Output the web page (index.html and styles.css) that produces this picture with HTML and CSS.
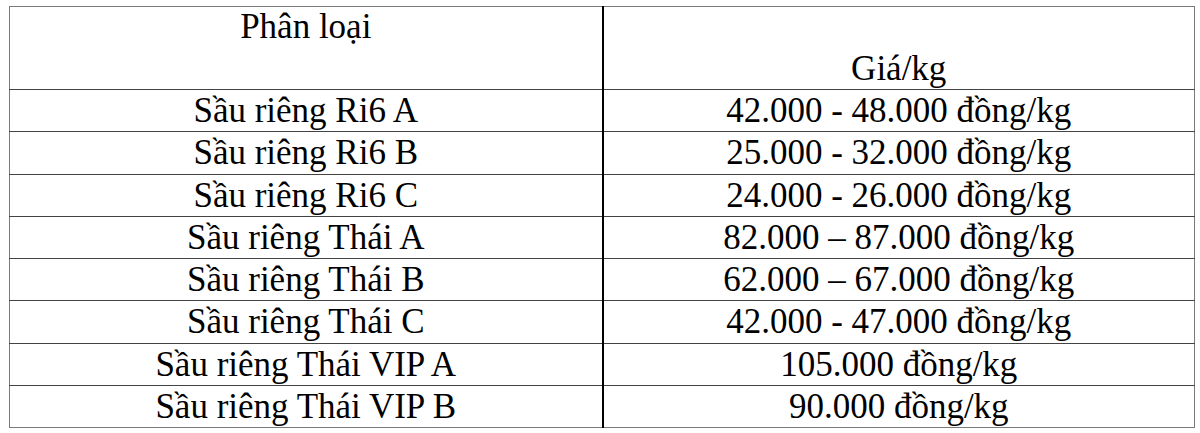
FILE: index.html
```html
<!DOCTYPE html>
<html lang="vi">
<head>
<meta charset="utf-8">
<title>Giá sầu riêng</title>
<link rel="stylesheet" href="styles.css">
</head>
<body>
<table class="price-table">
  <colgroup>
    <col class="col-name">
    <col class="col-price">
  </colgroup>
  <thead>
    <tr class="head-row">
      <th class="head-name">Phân loại</th>
      <th class="head-price">Giá/kg</th>
    </tr>
  </thead>
  <tbody>
    <tr><td class="name">Sầu riêng Ri6 A</td><td class="price">42.000 - 48.000 đồng/kg</td></tr>
    <tr><td class="name">Sầu riêng Ri6 B</td><td class="price">25.000 - 32.000 đồng/kg</td></tr>
    <tr><td class="name">Sầu riêng Ri6 C</td><td class="price">24.000 - 26.000 đồng/kg</td></tr>
    <tr><td class="name">Sầu riêng Thái A</td><td class="price">82.000 – 87.000 đồng/kg</td></tr>
    <tr><td class="name">Sầu riêng Thái B</td><td class="price">62.000 – 67.000 đồng/kg</td></tr>
    <tr><td class="name">Sầu riêng Thái C</td><td class="price">42.000 - 47.000 đồng/kg</td></tr>
    <tr><td class="name">Sầu riêng Thái VIP A</td><td class="price">105.000 đồng/kg</td></tr>
    <tr><td class="name">Sầu riêng Thái VIP B</td><td class="price">90.000 đồng/kg</td></tr>
  </tbody>
</table>
</body>
</html>
```
FILE: styles.css
```css
html, body {
  margin: 0;
  padding: 0;
  background: #ffffff;
}

body {
  padding: 6px 0 0 9px;
  font-family: "Liberation Serif", "Times New Roman", serif;
  color: #000;
}

.price-table {
  border-collapse: collapse;
  table-layout: fixed;
  width: 1185px;
  border: 1px solid #7a7a7a;
  font-size: 35px;
}

.col-name { width: 593px; }
.col-price { width: 592px; }

.price-table th,
.price-table td {
  padding: 0;
  text-align: center;
  font-weight: normal;
  border-top: 1px solid #444;
  border-bottom: 1px solid #444;
  white-space: nowrap;
}

.price-table .name {
  border-right: 2px solid #000;
}

.head-row th {
  height: 82px;
  border-top-color: #7a7a7a;
  line-height: 40px;
}

.head-name {
  vertical-align: top;
  padding-top: 2px;
  border-right: 2px solid #000;
}

.head-price {
  vertical-align: bottom;
}

.price-table td {
  line-height: 40.25px;
  padding-top: 1px;
  vertical-align: middle;
}

.price-table tbody tr:last-child td {
  border-bottom-color: #7a7a7a;
}
```
